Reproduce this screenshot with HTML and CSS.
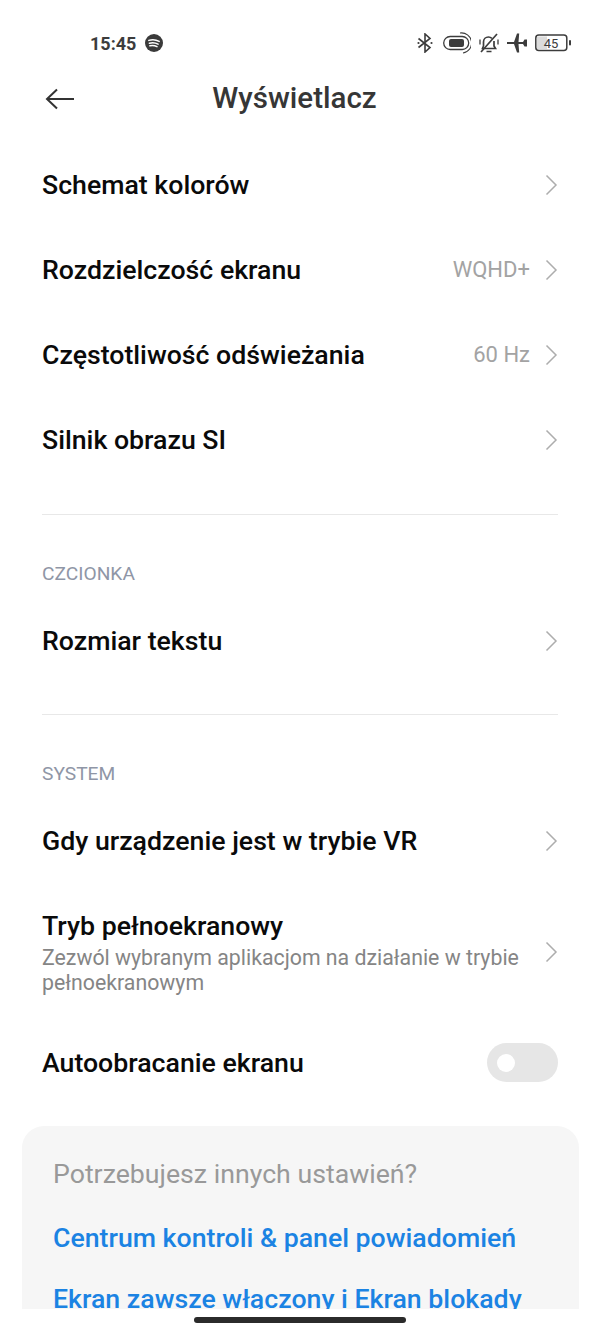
FILE: index.html
```html
<!DOCTYPE html>
<html lang="pl">
<head>
    <meta charset="UTF-8">
    <meta name="viewport" content="width=device-width, initial-scale=1.0">
    <title>Wyświetlacz</title>
    <link rel="stylesheet" href="styles.css">
</head>
<body>
    <!-- Status bar -->
    <div class="status-bar">
        <div class="status-left">
            <span class="clock">15:45</span>
            <svg class="spotify" width="18" height="18" viewBox="0 0 18 18">
                <circle cx="9" cy="9" r="9" fill="#3a3a3a"/>
                <path d="M3.800 6.400c3.400-1 7.200-.7 10.400 1M4.400 9.200c2.900-.8 6-.5 8.700 1M4.900 11.800c2.400-.6 4.900-.3 7.100.9" fill="none" stroke="#fff" stroke-width="1.500" stroke-linecap="round"/>
            </svg>
        </div>
        <div class="status-right">
            <svg class="bt" width="16" height="20" viewBox="0 0 16 20" fill="none" stroke="#3c3c3c" stroke-width="1.600">
                <path d="M1.500 5.500l11.500 9-5 4.500V1l5 4.500-11.500 9"/>
                <circle cx="1.500" cy="10" r="1.100" fill="#3c3c3c" stroke="none"/>
                <circle cx="14.500" cy="10" r="1.100" fill="#3c3c3c" stroke="none"/>
            </svg>
            <svg width="28" height="22" viewBox="0 0 28 22" fill="none" stroke="#3c3c3c">
                <rect x=".7" y="4.500" width="25" height="13" rx="6.500" stroke-width="1.300"/>
                <rect x="6" y="7" width="15" height="8" rx="2" fill="#3c3c3c" stroke="none"/>
                <path d="M17 1a10 10 0 0 1 3 20" stroke-width="1.100"/>
            </svg>
            <svg width="20" height="22" viewBox="0 0 20 22" fill="none" stroke="#3c3c3c" stroke-width="1.700">
                <path d="M4.500 14v-4c0-3 2.300-5 5-5 1.300 0 2.500.5 3.400 1.300M15 9v5l1.500 2.500h-13L4.500 14"/>
                <path d="M7.500 19.500h5M2 20L18 2"/>
                <path d="M1 7.500v5M19 7.500v5" stroke-width="1.300"/>
            </svg>
            <svg width="20" height="20" viewBox="0 0 20 20">
                <path d="M0 9h7L10 .5h2.200L11.500 9h4.500l1.500-2.500H20v7h-2.500L16 11h-4.500l.7 8.500H10L7 11H0z" fill="#3c3c3c"/>
            </svg>
            <svg class="battery" width="36" height="18" viewBox="0 0 36 18">
                <rect x=".8" y="1" width="31" height="15.500" rx="3" fill="#fff" stroke="#3c3c3c" stroke-width="1.500"/>
                <rect x="2" y="2.500" width="10" height="12.500" fill="#dcdcdc"/>
                <rect x="34" y="6" width="2" height="5.500" rx="1" fill="#3c3c3c"/>
                <text x="16" y="13.500" class="battery-text" text-anchor="middle">45</text>
            </svg>
        </div>
    </div>

    <!-- Header -->
    <header class="top-bar">
        <svg class="back" width="30" height="22" viewBox="0 0 30 22" fill="none" stroke="#333" stroke-width="2">
            <path d="M29 11H2M12 1.500L2 11l10 9.500"/>
        </svg>
        <h1 class="title">Wyświetlacz</h1>
    </header>

    <!-- Settings -->
    <section class="group">
        <div class="row"><span class="row-name">Schemat kolorów</span><svg class="chev" viewBox="0 0 13 22"><path d="M1.500 1.500L11 11l-9.500 9.500"/></svg></div>
        <div class="row"><span class="row-name">Rozdzielczość ekranu</span><span class="row-value">WQHD+</span><svg class="chev" viewBox="0 0 13 22"><path d="M1.500 1.500L11 11l-9.500 9.500"/></svg></div>
        <div class="row"><span class="row-name">Częstotliwość odświeżania</span><span class="row-value">60 Hz</span><svg class="chev" viewBox="0 0 13 22"><path d="M1.500 1.500L11 11l-9.500 9.500"/></svg></div>
        <div class="row"><span class="row-name">Silnik obrazu SI</span><svg class="chev" viewBox="0 0 13 22"><path d="M1.500 1.500L11 11l-9.500 9.500"/></svg></div>
    </section>

    <hr class="divider">
    <h2 class="group-label">CZCIONKA</h2>
    <section class="group">
        <div class="row"><span class="row-name">Rozmiar tekstu</span><svg class="chev" viewBox="0 0 13 22"><path d="M1.500 1.500L11 11l-9.500 9.500"/></svg></div>
    </section>

    <hr class="divider divider-second">
    <h2 class="group-label">SYSTEM</h2>
    <section class="group">
        <div class="row"><span class="row-name">Gdy urządzenie jest w trybie VR</span><svg class="chev" viewBox="0 0 13 22"><path d="M1.500 1.500L11 11l-9.500 9.500"/></svg></div>
        <div class="row row-tall">
            <div class="row-text">
                <span class="row-name">Tryb pełnoekranowy</span>
                <span class="row-desc">Zezwól wybranym aplikacjom na działanie w trybie pełnoekranowym</span>
            </div>
            <svg class="chev" viewBox="0 0 13 22"><path d="M1.500 1.500L11 11l-9.500 9.500"/></svg>
        </div>
        <div class="row"><span class="row-name">Autoobracanie ekranu</span><div class="toggle"><div class="knob"></div></div></div>
    </section>

    <!-- Suggestions card, cut off by the nav bar -->
    <div class="card">
        <p class="card-title">Potrzebujesz innych ustawień?</p>
        <a class="card-link">Centrum kontroli &amp; panel powiadomień</a>
        <a class="card-link card-link-next">Ekran zawsze włączony i Ekran blokady</a>
    </div>

    <!-- Nav bar -->
    <div class="nav-bar"><div class="home-pill"></div></div>
</body>
</html>
```

FILE: styles.css
```css
/* Reset */
* {
    box-sizing: border-box;
}

html, body {
    height: 1333px;
}

body {
    margin: 0;
    padding: 0;
    background: #fff;
    font-family: 'Roboto', 'Liberation Sans', sans-serif;
    overflow: hidden;
    display: flex;
    flex-direction: column;
}

/* Status bar */
.status-bar {
    height: 57px;
    padding: 29px 29px 0 90px;
    display: flex;
    justify-content: space-between;
    align-items: flex-start;
}

.status-left {
    display: flex;
    align-items: center;
    gap: 9px;
    height: 28px;
}

.clock {
    font-size: 18px;
    font-weight: 700;
    color: #3c3c3c;
}

.status-right {
    display: flex;
    align-items: center;
    gap: 8px;
    height: 28px;
}

.bt {
    margin-right: 2px;
}

.battery-text {
    font-family: 'Roboto', sans-serif;
    font-size: 13px;
    fill: #3c3c3c;
}

/* Header */
.top-bar {
    height: 85px;
    position: relative;
    display: flex;
    align-items: center;
    justify-content: center;
    padding: 0 11px 3px 0;
}

.back {
    position: absolute;
    left: 45px;
    top: 31px;
}

.title {
    margin: 0;
    font-size: 29.5px;
    font-weight: 500;
    color: #363636;
}

/* Rows */
.group {
    display: flex;
    flex-direction: column;
}

.row {
    height: 85px;
    padding: 0 42px;
    display: flex;
    align-items: center;
}

.row-tall {
    height: 137px;
}

.row-name {
    font-size: 26.7px;
    font-weight: 500;
    color: #0a0a0a;
    flex: 1;
}

.row-value {
    font-size: 22px;
    color: #a3a3a3;
    margin-right: 15px;
}

.row-text {
    flex: 1;
    display: flex;
    flex-direction: column;
    gap: 3px;
    padding: 2px 18px 0 0;
}

.row-desc {
    font-size: 21.3px;
    line-height: 25px;
    color: #858585;
}

.chev {
    width: 13px;
    height: 22px;
    flex: none;
    fill: none;
    stroke: #adadad;
    stroke-width: 1.5;
}

.toggle {
    width: 71px;
    height: 39px;
    flex: none;
    border-radius: 20px;
    background: #e6e6e6;
    display: flex;
    align-items: center;
    padding-left: 10px;
}

.knob {
    width: 18px;
    height: 18px;
    border-radius: 50%;
    background: #fff;
}

.divider {
    margin: 32px 42px 0;
    border: none;
    border-top: 1px solid #e8e8e8;
}

.divider-second {
    margin-top: 31px;
}

.group-label {
    margin: 48px 42px 13px;
    height: 22px;
    font-size: 19.2px;
    line-height: 22px;
    font-weight: 400;
    color: #8f96a6;
}

/* Card */
.card {
    margin: 21px 21px 0 22px;
    height: 183px;
    flex: none;
    padding: 31px 31px 0;
    background: #f6f6f6;
    border-radius: 22px 22px 0 0;
    overflow: hidden;
    display: flex;
    flex-direction: column;
}

.card-title {
    margin: 0;
    font-size: 26.7px;
    line-height: 34px;
    color: #999;
}

.card-link {
    margin-top: 31px;
    font-size: 26.7px;
    line-height: 32px;
    font-weight: 500;
    color: #1b83e3;
    white-space: nowrap;
}

.card-link-next {
    margin-top: 29px;
}

/* Nav bar */
.nav-bar {
    flex: 1;
    display: flex;
    justify-content: center;
    padding-top: 8px;
}

.home-pill {
    width: 212px;
    height: 6px;
    border-radius: 3px;
    background: #2b2b2b;
}
```
